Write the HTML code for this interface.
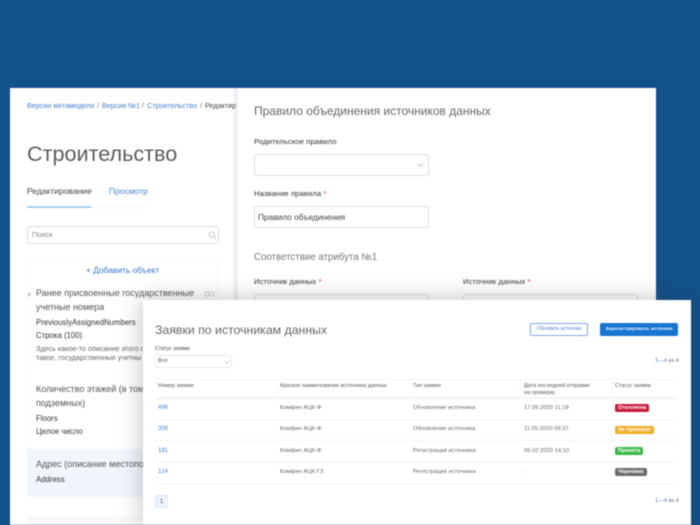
<!DOCTYPE html>
<html lang="ru"><head><meta charset="utf-8">
<style>
html,body{margin:0;padding:0}
body{width:700px;height:525px;overflow:hidden;background:#12518a;position:relative;font-family:"Liberation Sans","DejaVu Sans",sans-serif;color:#3a3a3a}
div,span,a{position:absolute;white-space:nowrap;box-sizing:border-box}
#w{left:0;top:0;width:700px;height:525px;filter:blur(.45px);overflow:hidden}
.l{color:#4a80d0}
.ip{background:#fff;border:1px solid #dcdce0;border-radius:3px}
.f{font-size:7.7px;color:#333;letter-spacing:.05px}
.t{font-size:5.5px;color:#555;line-height:7px}
.c{font-size:5.8px;color:#666}
.n{font-size:6px;color:#4a80d0}
.hr{height:1px;background:#f3f4f6;left:155px;width:523px}
.b{font-size:5.3px;color:#fff;font-weight:700;height:8px;line-height:8px;border-radius:2px;padding:0 3px;left:615px}
.bc{font-size:7.2px;top:101px}
.h2{font-size:9.0px;color:#555;line-height:13.5px}
.s{font-size:7.8px;color:#333}
</style></head><body><div id="w">
<div style="left:10px;top:88px;width:646px;height:437px;background:#fff;box-shadow:0 -1px 1px #2a4f9a"></div>
<div style="left:232px;top:88px;width:6px;height:437px;background:linear-gradient(90deg,#fff,#eaeaee 80%,#fff)"></div>

<div class="l bc" style="left:27px">Версии метамодели</div>
<div class="bc" style="left:97px;color:#777">/</div>
<div class="l bc" style="left:102px">Версия №1</div>
<div class="bc" style="left:142px;color:#777">/</div>
<div class="l bc" style="left:147px">Строительство</div>
<div class="bc" style="left:200px;color:#777">/</div>
<div class="bc" style="left:205px;width:32px;overflow:hidden;color:#444">Редактир</div>

<div style="left:27px;top:141px;font-size:21.6px;color:#5c5c60">Строительство</div>
<div style="left:27px;top:186px;font-size:8.5px;color:#444">Редактирование</div>
<div class="l" style="left:109px;top:186px;font-size:8.5px">Просмотр</div>
<div style="left:27px;top:207px;width:120px;height:1px;background:#f4f4f6"></div>
<div style="left:27px;top:206px;width:64px;height:2px;background:#a9cbf2"></div>

<div class="ip" style="left:27px;top:226px;width:192px;height:18px"></div>
<div style="left:32px;top:230px;font-size:7.4px;color:#888">Поиск</div>
<svg style="position:absolute;left:208px;top:231px" width="9" height="9" viewBox="0 0 9 9" fill="none" stroke="#c8c8cc" stroke-width="1"><circle cx="3.7" cy="3.7" r="2.7"/><path d="M5.8 5.8L8.3 8.3"/></svg>

<div style="left:27px;top:262px;width:192px;height:1px;background:#f9f9fa"></div>
<div style="left:27px;top:262px;width:1px;height:263px;background:#f8f8f9"></div>
<div style="left:218px;top:262px;width:1px;height:263px;background:#f4f4f6"></div>
<div style="left:86px;top:265px;font-size:8.4px;color:#3a74cc">+ Добавить объект</div>

<svg style="position:absolute;left:28px;top:292px" width="4" height="5"><path d="M0 0L3.5 2.5L0 5Z" fill="#c4c4c8"/></svg>
<div class="h2" style="left:36px;top:287px">Ранее присвоенные государственные<br>учетные номера</div>
<svg style="position:absolute;left:204px;top:291px" width="11" height="6" fill="none" stroke="#d0d0d4" stroke-width="1.1"><rect x=".7" y="1" width="5" height="4" rx="2"/><rect x="5" y="1" width="5" height="4" rx="2"/></svg>
<div class="s" style="left:36px;top:318px">PreviouslyAssignedNumbers</div>
<div class="s" style="left:36px;top:331px">Строка (100)</div>
<div style="left:36px;top:344px;font-size:7.2px;color:#666;line-height:9px">Здесь какое-то описание этого о<br>такое, государственные учетны</div>

<div class="h2" style="left:36px;top:383px">Количество этажей (в том<br>подземных)</div>
<div class="s" style="left:36px;top:414px">Floors</div>
<div class="s" style="left:36px;top:427px">Целое число</div>

<div style="left:27px;top:449px;width:192px;height:48px;background:#f1f5fd"></div>
<div class="h2" style="left:36px;top:458px">Адрес (описание местопо</div>
<div class="s" style="left:36px;top:475px">Address</div>
<div style="left:27px;top:497px;width:192px;height:18px;background:#fff"></div>
<div style="left:27px;top:515px;width:192px;height:10px;background:#f8f8f9"></div>

<div style="left:254px;top:104px;font-size:12px;color:#66666a">Правило объединения источников данных</div>
<div class="f" style="left:254px;top:137px">Родительское правило</div>
<div class="ip" style="left:254px;top:154px;width:175px;height:22px"></div>
<svg style="position:absolute;left:417px;top:163px" width="7" height="5" fill="none" stroke="#c8c8cc"><path d="M.7.7L3.5 3.5L6.3.7"/></svg>
<div class="f" style="left:254px;top:189px">Название правила <span style="position:static;color:#d33">*</span></div>
<div class="ip" style="left:254px;top:206px;width:175px;height:22px"></div>
<div style="left:258px;top:212px;font-size:8.3px;color:#444">Правило объединения</div>
<div style="left:254px;top:252px;font-size:9.7px;color:#77777b">Соответствие атрибута №1</div>
<div class="f" style="left:254px;top:277px">Источник данных <span style="position:static;color:#d33">*</span></div>
<div class="f" style="left:463px;top:277px">Источник данных <span style="position:static;color:#d33">*</span></div>
<div class="ip" style="left:254px;top:294px;width:175px;height:22px"></div>
<div class="ip" style="left:463px;top:294px;width:175px;height:22px"></div>

<div style="left:143px;top:300px;width:548px;height:225px;background:#fff;box-shadow:0 0 22px rgba(50,50,60,.32)"></div>
<div style="left:155px;top:323px;font-size:12.3px;color:#66666a">Заявки по источникам данных</div>
<div style="left:530px;top:323px;width:58px;height:13px;border:1px solid #7ea8e6;border-radius:2px;background:#fff;color:#4f80cc;font-size:5px;line-height:11px;text-align:center">Обновить источник</div>
<div style="left:600px;top:323px;width:78px;height:13px;border-radius:2px;background:#1874d2;color:#e8f0fa;font-size:4.8px;font-weight:700;line-height:13px;text-align:center">Зарегистрировать источник</div>

<div class="t" style="left:155px;top:346px;color:#444;font-size:5.3px">Статус заявки</div>
<div class="ip" style="left:155px;top:355px;width:77px;height:13px;border-color:#e8e8ec"></div>
<div style="left:158px;top:358px;font-size:5.6px;color:#555">Все</div>
<svg style="position:absolute;left:224px;top:360px" width="6" height="4" fill="none" stroke="#c4c4c8" stroke-width=".8"><path d="M.6.6L3 3L5.4.6"/></svg>
<div style="left:655px;top:358px;font-size:5.6px;color:#666"><span class="l" style="position:static">1—4</span> из 4</div>

<div class="hr" style="top:379px"></div>
<div class="hr" style="top:397px;height:2px"></div>
<div class="hr" style="top:419px"></div>
<div class="hr" style="top:440px"></div>
<div class="hr" style="top:461px"></div>
<div class="hr" style="top:483px"></div>
<div style="left:277px;top:380px;width:1px;height:17px;background:#f7f7f8"></div>
<div style="left:410px;top:380px;width:1px;height:17px;background:#f7f7f8"></div>
<div style="left:520px;top:380px;width:1px;height:17px;background:#f7f7f8"></div>
<div style="left:612px;top:380px;width:1px;height:17px;background:#f7f7f8"></div>

<div class="t" style="left:158px;top:383px">Номер заявки</div>
<div class="t" style="left:280px;top:383px">Краткое наименование источника данных</div>
<div class="t" style="left:413px;top:383px">Тип заявки</div>
<div class="t" style="left:524px;top:383px;line-height:6.5px">Дата последней отправки<br>на проверку</div>
<div class="t" style="left:615px;top:383px">Статус заявки</div>

<div class="n" style="left:158px;top:405px">496</div>
<div class="c" style="left:280px;top:405px">Комфин АЦК-Ф</div>
<div class="c" style="left:413px;top:405px">Обновление источника</div>
<div class="c" style="left:524px;top:405px">17.05.2020 11:18</div>
<div class="b" style="top:404px;background:#c8193a">Отклонена</div>

<div class="n" style="left:158px;top:426px">308</div>
<div class="c" style="left:280px;top:426px">Комфин АЦК-Ф</div>
<div class="c" style="left:413px;top:426px">Обновление источника</div>
<div class="c" style="left:524px;top:426px">11.05.2020 09:37</div>
<div class="b" style="top:426px;background:#f0ac22">На проверке</div>

<div class="n" style="left:158px;top:448px">181</div>
<div class="c" style="left:280px;top:448px">Комфин АЦК-Ф</div>
<div class="c" style="left:413px;top:448px">Регистрация источника</div>
<div class="c" style="left:524px;top:448px">05.02.2020 14:10</div>
<div class="b" style="top:447px;background:#3cb84a">Принята</div>

<div class="n" style="left:158px;top:469px">124</div>
<div class="c" style="left:280px;top:469px">Комфин АЦК-ГЗ</div>
<div class="c" style="left:413px;top:469px">Регистрация источника</div>
<div class="c" style="left:524px;top:469px">-</div>
<div class="b" style="top:468px;background:#6a6a6e">Черновик</div>

<div style="left:155px;top:495px;width:13px;height:13px;background:#eef4fc;border:1px solid #dbe7f6;border-radius:2px;font-size:6.4px;color:#555;line-height:11px;text-align:center">1</div>
<div style="left:655px;top:498px;font-size:5.6px;color:#666"><span class="l" style="position:static">1—4</span> из 4</div>
</div></body></html>
